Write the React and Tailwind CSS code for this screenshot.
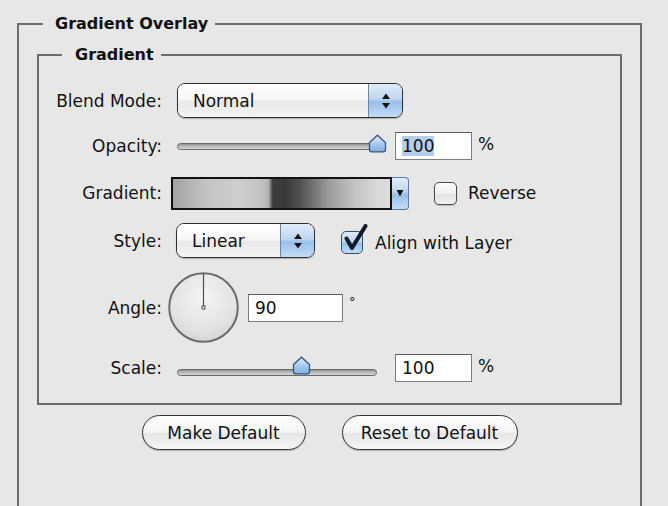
import React from "react";

const selectBody =
  "bg-[linear-gradient(to_bottom,#ffffff_0%,#f7f7f7_45%,#e9e9e9_55%,#f3f3f3_100%)]";
const blueGloss =
  "bg-[linear-gradient(to_bottom,#e1edf9_0%,#bcd5f0_46%,#98bfe9_54%,#c2dcf6_100%)]";

function UpDown() {
  return (
    <svg width="10" height="18" viewBox="0 0 10 18">
      <polygon points="1,7 5,1.5 9,7" fill="#141414" />
      <polygon points="1,11 5,16.5 9,11" fill="#141414" />
    </svg>
  );
}

function Select({ value, width }) {
  return (
    <div
      className={`flex h-[35px] ${width} shrink-0 overflow-hidden rounded-[8px] border border-[#2f2f2f] shadow-[0_1px_1px_rgba(0,0,0,0.25)]`}
    >
      <div className={`flex flex-1 items-center pl-[15px] ${selectBody}`}>
        <span>{value}</span>
      </div>
      <div
        className={`flex w-[34px] items-center justify-center border-l border-[#6a87aa] ${blueGloss}`}
      >
        <UpDown />
      </div>
    </div>
  );
}

function Thumb() {
  return (
    <svg width="19" height="19" viewBox="0 0 19 19">
      <defs>
        <linearGradient id="tg" x1="0" y1="0" x2="0" y2="1">
          <stop offset="0" stopColor="#e4effb" />
          <stop offset="0.5" stopColor="#a9cbef" />
          <stop offset="1" stopColor="#7fb0e4" />
        </linearGradient>
      </defs>
      <path
        d="M1.5 8.5 L9.5 1.2 L17.5 8.5 V15.5 Q17.5 17.8 15.2 17.8 H3.8 Q1.5 17.8 1.5 15.5 Z"
        fill="url(#tg)"
        stroke="#35557f"
        strokeWidth="1.3"
      />
    </svg>
  );
}

function Slider({ thumbLeft, trackOffset = "" }) {
  return (
    <div className="relative ml-[15px] h-[30px] w-[218px] shrink-0">
      <div className={`flex h-full items-center ${trackOffset}`}>
        <div className="h-[7px] w-[200px] rounded-full border border-[#6a6a6a] bg-[linear-gradient(to_bottom,#8e8e8e_0%,#b9b9b9_40%,#d4d4d4_100%)]" />
      </div>
      <div className="absolute top-[3px]" style={{ left: thumbLeft }}>
        <Thumb />
      </div>
    </div>
  );
}

function NumBox({ value, width = "w-[77px]", selected = false }) {
  return (
    <div
      className={`flex h-[28px] ${width} shrink-0 items-center border border-[#7c7c7c] border-t-[#5a5a5a] bg-white pl-[6px]`}
    >
      <span className={selected ? "bg-[#b3cdeb] leading-[20px]" : "leading-[20px]"}>
        {value}
      </span>
    </div>
  );
}

function Label({ children }) {
  return <div className="w-[123px] shrink-0 text-right">{children}</div>;
}

export default function App() {
  return (
    <div className="h-[506px] w-[668px] overflow-hidden bg-[#e7e7e7] font-['DejaVu_Sans',sans-serif] text-[17px] leading-[20px] text-[#111]">
      <fieldset className="ml-[17px] mt-[14px] h-[500px] w-[625px] border-2 border-b-0 border-[#6c6c6c]">
        <legend className="ml-[24px] pl-[12px] pr-[7px] text-[16px] font-bold leading-[20px]">
          Gradient Overlay
        </legend>
        <div className="pl-[18px] pt-[11px]">
          <fieldset className="w-[585px] border-2 border-[#6c6c6c]">
            <legend className="ml-[23px] pl-[13px] pr-[7px] text-[16px] font-bold leading-[20px]">
              Gradient
            </legend>
            <div className="flex flex-col pb-[20px] pt-[18px]">
              {/* Blend Mode */}
              <div className="flex h-[35px] items-center">
                <Label>Blend Mode:</Label>
                <div className="ml-[15px]">
                  <Select value="Normal" width="w-[226px]" />
                </div>
              </div>

              {/* Opacity */}
              <div className="mt-[13px] flex h-[30px] items-center">
                <Label>Opacity:</Label>
                <Slider thumbLeft={191} />
                <NumBox value="100" selected />
                <span className="ml-[6px] self-start pt-[3px]">%</span>
              </div>

              {/* Gradient */}
              <div className="mt-[15px] flex h-[34px] items-center">
                <Label>Gradient:</Label>
                <div className="ml-[9px] flex h-[33px]">
                  <div className="h-full w-[221px] border-2 border-[#111] bg-[linear-gradient(to_right,#a2a2a2_0%,#c3c3c3_15%,#cecece_30%,#c4c4c4_40%,#b2b2b2_44%,#3c3c3c_46%,#3a3a3a_52%,#4e4e4e_58%,#707070_64%,#9c9c9c_72%,#c4c4c4_84%,#d8d8d8_94%,#dcdcdc_100%)]" />
                  <div
                    className={`flex w-[17px] items-center justify-center rounded-r-[4px] border border-l-0 border-[#5e7ea4] ${blueGloss}`}
                  >
                    <svg width="8" height="8" viewBox="0 0 8 8">
                      <polygon points="0.5,1 7.5,1 4,7.5" fill="#141414" />
                    </svg>
                  </div>
                </div>
                <div className="ml-[25px] h-[23px] w-[23px] rounded-[5px] border border-[#4a4a4a] bg-[linear-gradient(to_bottom,#fbfbfb_0%,#f0f0f0_50%,#e2e2e2_55%,#f2f2f2_100%)] shadow-[0_1px_1px_rgba(0,0,0,0.2)]" />
                <span className="ml-[11px]">Reverse</span>
              </div>

              {/* Style */}
              <div className="mt-[13px] flex h-[35px] items-center">
                <Label>Style:</Label>
                <div className="ml-[14px]">
                  <Select value="Linear" width="w-[139px]" />
                </div>
                <div className="relative ml-[26px] mt-[4px] h-[23px] w-[22px]">
                  <div
                    className={`h-full w-full rounded-[5px] border border-[#34506f] ${blueGloss}`}
                  />
                  <svg
                    className="absolute -top-[7px] left-[2px]"
                    width="26"
                    height="28"
                    viewBox="0 0 26 28"
                  >
                    <path
                      d="M3.5 14.5 L9 24 L22.5 2"
                      fill="none"
                      stroke="#101a2b"
                      strokeWidth="4"
                      strokeLinecap="round"
                      strokeLinejoin="round"
                    />
                  </svg>
                </div>
                <span className="ml-[12px] mt-[4px]">Align with Layer</span>
              </div>

              {/* Angle */}
              <div className="mt-[14px] flex h-[71px] items-center">
                <Label>Angle:</Label>
                <div className="ml-[6px] shrink-0">
                  <svg width="71" height="71" viewBox="0 0 71 71">
                    <defs>
                      <radialGradient id="dial" cx="0.5" cy="0.35" r="0.7">
                        <stop offset="0" stopColor="#f4f4f4" />
                        <stop offset="0.7" stopColor="#e2e2e2" />
                        <stop offset="1" stopColor="#cfcfcf" />
                      </radialGradient>
                    </defs>
                    <circle
                      cx="35.5"
                      cy="35.5"
                      r="34.3"
                      fill="url(#dial)"
                      stroke="#6b6b6b"
                      strokeWidth="2"
                    />
                    <line
                      x1="35.5"
                      y1="2"
                      x2="35.5"
                      y2="34"
                      stroke="#505050"
                      strokeWidth="1.2"
                    />
                    <rect
                      x="34"
                      y="34"
                      width="3"
                      height="3"
                      fill="none"
                      stroke="#505050"
                      strokeWidth="1"
                    />
                  </svg>
                </div>
                <div className="ml-[9px]">
                  <NumBox value="90" width="w-[95px]" />
                </div>
                <span className="ml-[6px] self-start pt-[20px] text-[13px]">°</span>
              </div>

              {/* Scale */}
              <div className="mt-[10px] flex h-[30px] items-center">
                <Label>Scale:</Label>
                <Slider thumbLeft={115} trackOffset="pt-[8px]" />
                <NumBox value="100" />
                <span className="ml-[6px] self-start pt-[3px]">%</span>
              </div>
            </div>
          </fieldset>

          <div className="mt-[10px] flex justify-center gap-[36px] pr-[18px]">
            <button className="h-[35px] w-[164px] rounded-full border border-[#333] bg-[linear-gradient(to_bottom,#ffffff_0%,#f5f5f5_45%,#e6e6e6_55%,#f6f6f6_100%)] shadow-[0_1px_1px_rgba(0,0,0,0.25)]">
              Make Default
            </button>
            <button className="h-[35px] w-[176px] rounded-full border border-[#333] bg-[linear-gradient(to_bottom,#ffffff_0%,#f5f5f5_45%,#e6e6e6_55%,#f6f6f6_100%)] shadow-[0_1px_1px_rgba(0,0,0,0.25)]">
              Reset to Default
            </button>
          </div>
        </div>
      </fieldset>
    </div>
  );
}
